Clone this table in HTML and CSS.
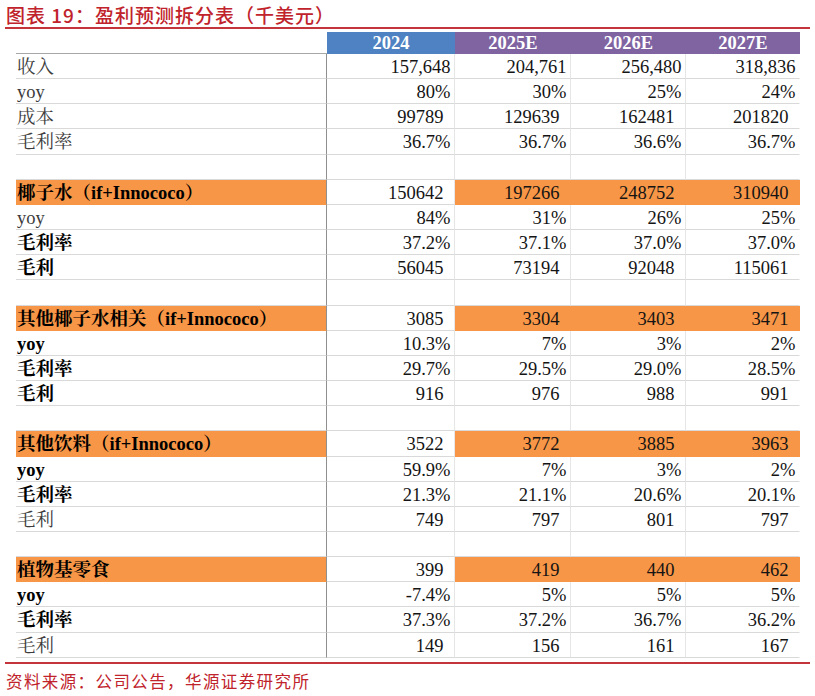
FILE: index.html
```html
<!DOCTYPE html>
<html lang="zh">
<head>
<meta charset="utf-8">
<title>盈利预测拆分表</title>
<link rel="stylesheet" href="styles.css">
</head>
<body>
<div class="title">图表 19：盈利预测拆分表（千美元）</div>
<div class="sheet">
  <div class="row head"><div class="c lab"></div><div class="c y24">2024</div><div class="c e">2025E</div><div class="c e">2026E</div><div class="c e">2027E</div></div>

  <div class="row"><div class="c lab">收入</div><div class="c">157,648</div><div class="c">204,761</div><div class="c">256,480</div><div class="c">318,836</div></div>
  <div class="row"><div class="c lab">yoy</div><div class="c">80%</div><div class="c">30%</div><div class="c">25%</div><div class="c">24%</div></div>
  <div class="row"><div class="c lab">成本</div><div class="c sp">99789</div><div class="c sp">129639</div><div class="c sp">162481</div><div class="c sp">201820</div></div>
  <div class="row"><div class="c lab">毛利率</div><div class="c">36.7%</div><div class="c">36.7%</div><div class="c">36.6%</div><div class="c">36.7%</div></div>
  <div class="row"><div class="c lab"></div><div class="c"></div><div class="c"></div><div class="c"></div><div class="c"></div></div>

  <div class="row org"><div class="c lab b">椰子水（if+Innococo）</div><div class="c sp">150642</div><div class="c sp o">197266</div><div class="c sp o">248752</div><div class="c sp o">310940</div></div>
  <div class="row"><div class="c lab">yoy</div><div class="c">84%</div><div class="c">31%</div><div class="c">26%</div><div class="c">25%</div></div>
  <div class="row"><div class="c lab b">毛利率</div><div class="c">37.2%</div><div class="c">37.1%</div><div class="c">37.0%</div><div class="c">37.0%</div></div>
  <div class="row"><div class="c lab b">毛利</div><div class="c sp">56045</div><div class="c sp">73194</div><div class="c sp">92048</div><div class="c sp">115061</div></div>
  <div class="row"><div class="c lab"></div><div class="c"></div><div class="c"></div><div class="c"></div><div class="c"></div></div>

  <div class="row org"><div class="c lab b">其他椰子水相关（if+Innococo）</div><div class="c sp">3085</div><div class="c sp o">3304</div><div class="c sp o">3403</div><div class="c sp o">3471</div></div>
  <div class="row"><div class="c lab b">yoy</div><div class="c">10.3%</div><div class="c">7%</div><div class="c">3%</div><div class="c">2%</div></div>
  <div class="row"><div class="c lab b">毛利率</div><div class="c">29.7%</div><div class="c">29.5%</div><div class="c">29.0%</div><div class="c">28.5%</div></div>
  <div class="row"><div class="c lab b">毛利</div><div class="c sp">916</div><div class="c sp">976</div><div class="c sp">988</div><div class="c sp">991</div></div>
  <div class="row"><div class="c lab"></div><div class="c"></div><div class="c"></div><div class="c"></div><div class="c"></div></div>

  <div class="row org"><div class="c lab b">其他饮料（if+Innococo）</div><div class="c sp">3522</div><div class="c sp o">3772</div><div class="c sp o">3885</div><div class="c sp o">3963</div></div>
  <div class="row"><div class="c lab b">yoy</div><div class="c">59.9%</div><div class="c">7%</div><div class="c">3%</div><div class="c">2%</div></div>
  <div class="row"><div class="c lab b">毛利率</div><div class="c">21.3%</div><div class="c">21.1%</div><div class="c">20.6%</div><div class="c">20.1%</div></div>
  <div class="row"><div class="c lab">毛利</div><div class="c sp">749</div><div class="c sp">797</div><div class="c sp">801</div><div class="c sp">797</div></div>
  <div class="row"><div class="c lab"></div><div class="c"></div><div class="c"></div><div class="c"></div><div class="c"></div></div>

  <div class="row org"><div class="c lab b">植物基零食</div><div class="c sp">399</div><div class="c sp o">419</div><div class="c sp o">440</div><div class="c sp o">462</div></div>
  <div class="row"><div class="c lab b">yoy</div><div class="c">-7.4%</div><div class="c">5%</div><div class="c">5%</div><div class="c">5%</div></div>
  <div class="row"><div class="c lab b">毛利率</div><div class="c">37.3%</div><div class="c">37.2%</div><div class="c">36.7%</div><div class="c">36.2%</div></div>
  <div class="row"><div class="c lab">毛利</div><div class="c sp">149</div><div class="c sp">156</div><div class="c sp">161</div><div class="c sp">167</div></div>
</div>
<div class="foot">资料来源：公司公告，华源证券研究所</div>
</body>
</html>
```
FILE: styles.css
```css
* { box-sizing: border-box; }

body {
  margin: 0;
  width: 815px;
  height: 696px;
  overflow: hidden;
  background: #fff;
  font-family: "Liberation Serif", "Noto Serif CJK SC", "Noto Sans CJK SC", serif;
}

.title {
  margin: 0 5px;
  height: 29px;
  padding: 3px 0 0 1px;
  border-bottom: 2px solid #c4343b;
  color: #c0232b;
  font-family: "Noto Sans CJK SC", sans-serif;
  font-size: 19px;
  font-weight: 500;
  letter-spacing: 1px;
  line-height: 24px;
  white-space: nowrap;
}

.sheet {
  margin: 3px 0 0 16px;
  width: 784px;
}

.row {
  display: grid;
  grid-template-columns: 311px 128px 116px 115px 114px;
  height: 25.17px;
}

.row.head { height: 22px; }

.c {
  border-bottom: 1px solid #d9d9d9;
  border-right: 1px solid #e6e6e6;
  padding: 2px 3.5px 0 0;
  text-align: right;
  font-size: 18.5px;
  line-height: 22px;
  color: #141414;
  white-space: nowrap;
}

.c:last-child { border-right-color: transparent; }

.c.sp { padding-right: 10.5px; }

.lab {
  text-align: left;
  padding-left: 1px;
  border-right: 1px solid #8f8f8f;
  color: #3c3c3c;
}

.lab.b {
  font-weight: bold;
  color: #000;
}

.head .c {
  border: none;
  padding: 0;
  text-align: center;
  color: #fff;
  font-weight: bold;
  line-height: 22px;
}

.head .lab {
  background: #fff;
  border-bottom: 1px solid #a8a8a8;
}

.head .y24 { background: #4f82c2; }
.head .e { background: #8064a2; }

.org .lab {
  background: #f79646;
  border-bottom-color: #f79646;
}

.org .o {
  background: #f79646;
  border-color: #f79646;
}

.foot {
  margin: 4px 5px 0;
  border-top: 2px solid #c4343b;
  padding: 5px 0 0 1px;
  color: #c0232b;
  font-family: "Noto Sans CJK SC", sans-serif;
  font-size: 16.5px;
  letter-spacing: 1.4px;
  line-height: 24px;
  white-space: nowrap;
}
```
